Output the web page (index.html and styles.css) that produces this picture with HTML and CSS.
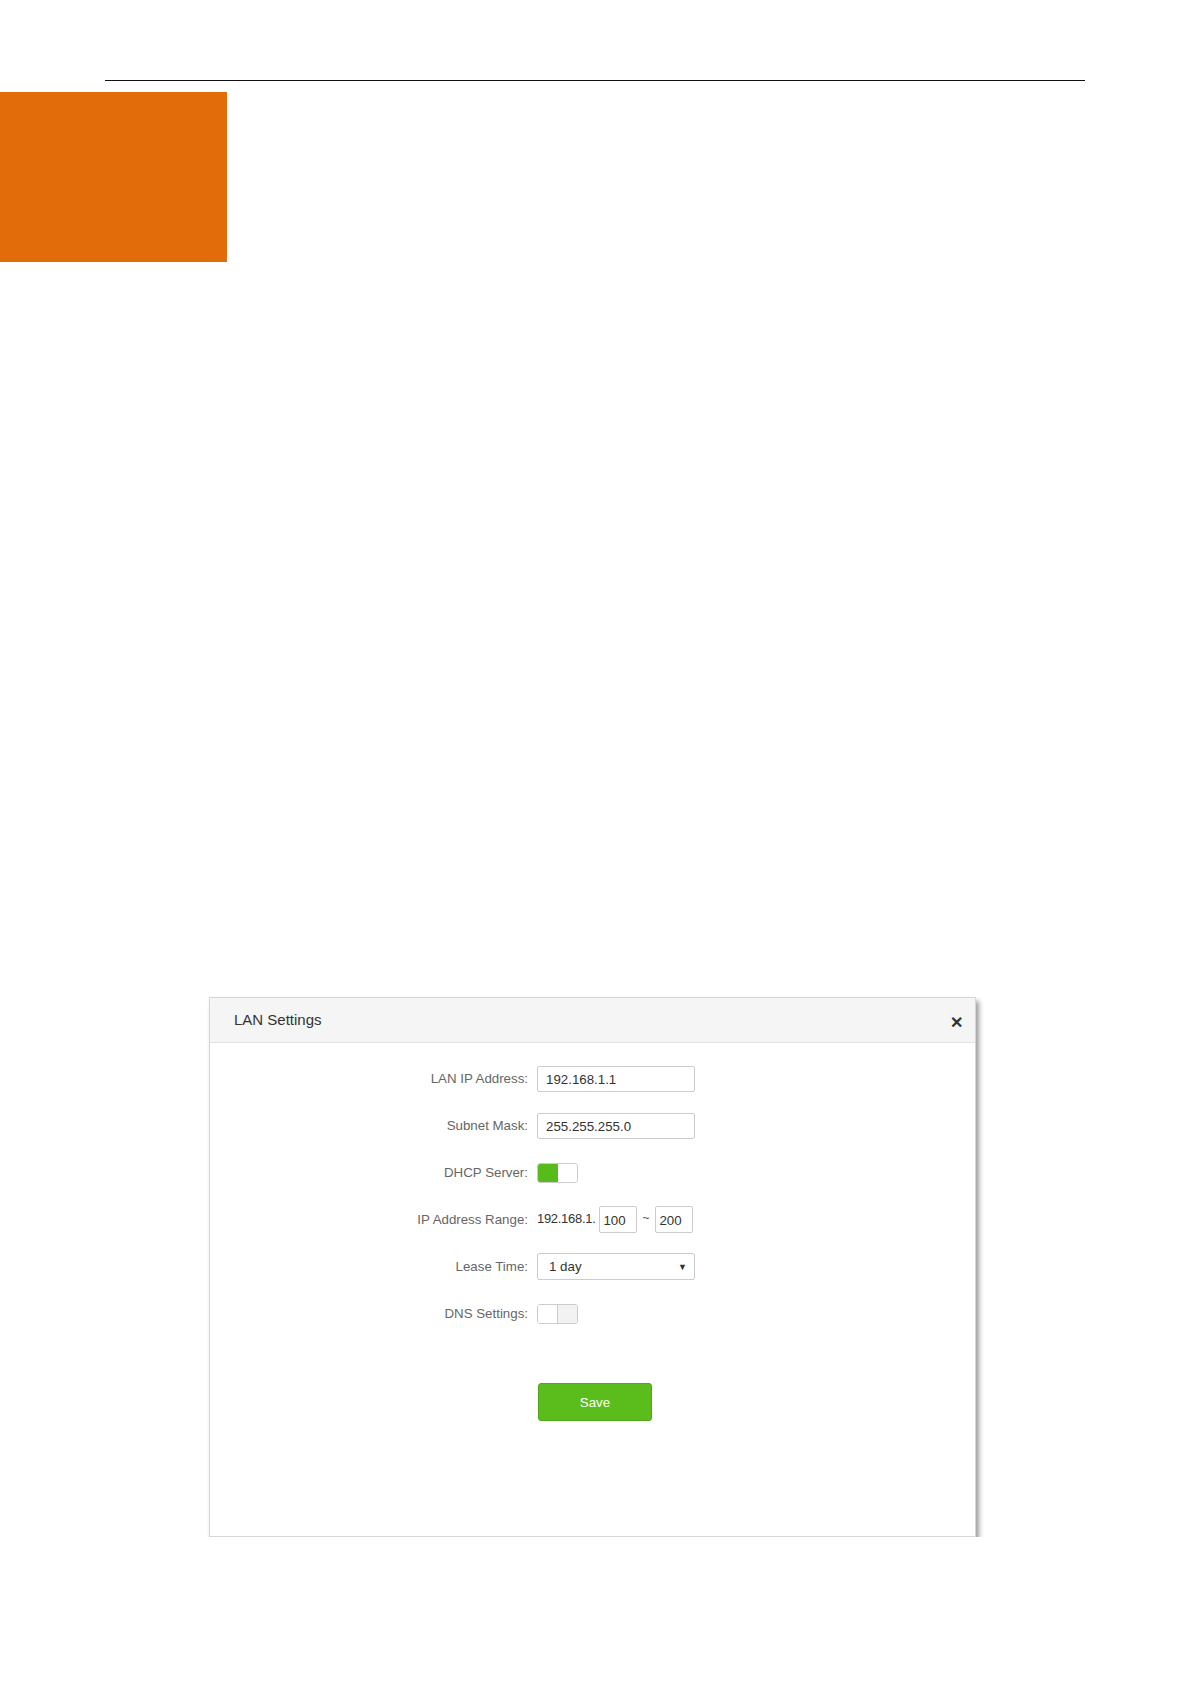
FILE: index.html
```html
<!DOCTYPE html>
<html lang="en">
<head>
    <meta charset="UTF-8">
    <title>LAN Settings</title>
    <link rel="stylesheet" href="styles.css">
</head>
<body>

    <div class="page-rule"></div>
    <div class="chapter-block"></div>

    <div class="dialog">
        <div class="dialog-head">
            <span class="dialog-title">LAN Settings</span>
            <span class="dialog-close">&#x2715;</span>
        </div>

        <div class="dialog-body">
            <div class="form">
                <label class="form-label">LAN IP Address:</label>
                <div class="form-ctrl"><div class="text-box">192.168.1.1</div></div>

                <label class="form-label">Subnet Mask:</label>
                <div class="form-ctrl"><div class="text-box">255.255.255.0</div></div>

                <label class="form-label">DHCP Server:</label>
                <div class="form-ctrl">
                    <div class="toggle on"><span class="half a"></span><span class="half b"></span></div>
                </div>

                <label class="form-label">IP Address Range:</label>
                <div class="form-ctrl range">
                    <span class="prefix">192.168.1.</span>
                    <div class="text-box small">100</div>
                    <span class="tilde">~</span>
                    <div class="text-box small">200</div>
                </div>

                <label class="form-label">Lease Time:</label>
                <div class="form-ctrl">
                    <div class="select-box"><span>1 day</span><span class="caret">&#9660;</span></div>
                </div>

                <label class="form-label">DNS Settings:</label>
                <div class="form-ctrl">
                    <div class="toggle off"><span class="half a"></span><span class="half b"></span></div>
                </div>
            </div>

            <div class="actions">
                <button class="btn-save">Save</button>
            </div>
        </div>
    </div>

</body>
</html>
```

FILE: styles.css
```css
body {
    margin: 0;
    padding-top: 80px;
    font-family: 'Liberation Sans', Arial, sans-serif;
    background: #fff;
    color: #333;
}

.page-rule {
    margin: 0 106px 0 105px;
    border-top: 1px solid #111;
}

.chapter-block {
    width: 227px;
    height: 170px;
    margin-top: 11px;
    background-color: #e36c0a;
}

.dialog {
    width: 765px;
    height: 538px;
    margin: 735px 0 0 209px;
    background: #fff;
    border: 1px solid #d6d6d6;
    box-shadow: 3px 4px 5px rgba(0, 0, 0, 0.4);
}

.dialog-head {
    height: 44px;
    display: flex;
    align-items: center;
    justify-content: space-between;
    padding: 0 12px 0 24px;
    background: #f5f5f5;
    border-bottom: 1px solid #e3e3e3;
}

.dialog-title {
    font-size: 15px;
    color: #333;
    margin-top: -2px;
}

.dialog-close {
    font-size: 16px;
    font-weight: bold;
    color: #333;
    margin-top: 4px;
}

.dialog-body {
    padding-top: 12px;
}

.form {
    display: grid;
    grid-template-columns: 318px 1fr;
    grid-auto-rows: 47px;
    column-gap: 9px;
}

.form-label {
    display: flex;
    align-items: center;
    justify-content: flex-end;
    font-size: 13.3px;
    color: #666;
}

.form-ctrl {
    display: flex;
    align-items: center;
}

.text-box {
    box-sizing: border-box;
    width: 158px;
    height: 26px;
    padding: 0 8px;
    line-height: 25px;
    border: 1px solid #ccc;
    border-radius: 2px;
    font-size: 13.3px;
    color: #333;
}

.text-box.small {
    width: 38px;
    height: 27px;
    padding: 0 3px;
    line-height: 27px;
}

.range .prefix {
    font-size: 13px;
    letter-spacing: -0.3px;
    color: #333;
    margin-right: 4px;
    margin-top: -3px;
}

.range .tilde {
    font-size: 12px;
    color: #555;
    margin: -3px 6px 0 5px;
}

.select-box {
    box-sizing: border-box;
    width: 158px;
    height: 27px;
    padding: 0 7px 0 11px;
    display: flex;
    align-items: center;
    justify-content: space-between;
    border: 1px solid #ccc;
    border-radius: 2px;
    font-size: 13.3px;
    color: #333;
}

.select-box .caret {
    font-size: 9px;
    color: #333;
}

.toggle {
    box-sizing: border-box;
    width: 41px;
    height: 20px;
    display: flex;
    border: 1px solid #ccc;
    border-radius: 3px;
    overflow: hidden;
}

.toggle .half {
    flex: 1;
}

.toggle.on .a {
    background: #57bb1b;
}

.toggle.on .b {
    background: #fff;
}

.toggle.off .a {
    background: #fff;
    border-right: 1px solid #ccc;
}

.toggle.off .b {
    background: #f2f2f2;
}

.actions {
    padding: 46px 0 0 328px;
}

.btn-save {
    width: 114px;
    height: 38px;
    background-color: #5bbd1b;
    border: 1px solid #4fa816;
    border-radius: 3px;
    color: #fff;
    font-family: 'Liberation Sans', Arial, sans-serif;
    font-size: 13.3px;
    cursor: pointer;
}
```
